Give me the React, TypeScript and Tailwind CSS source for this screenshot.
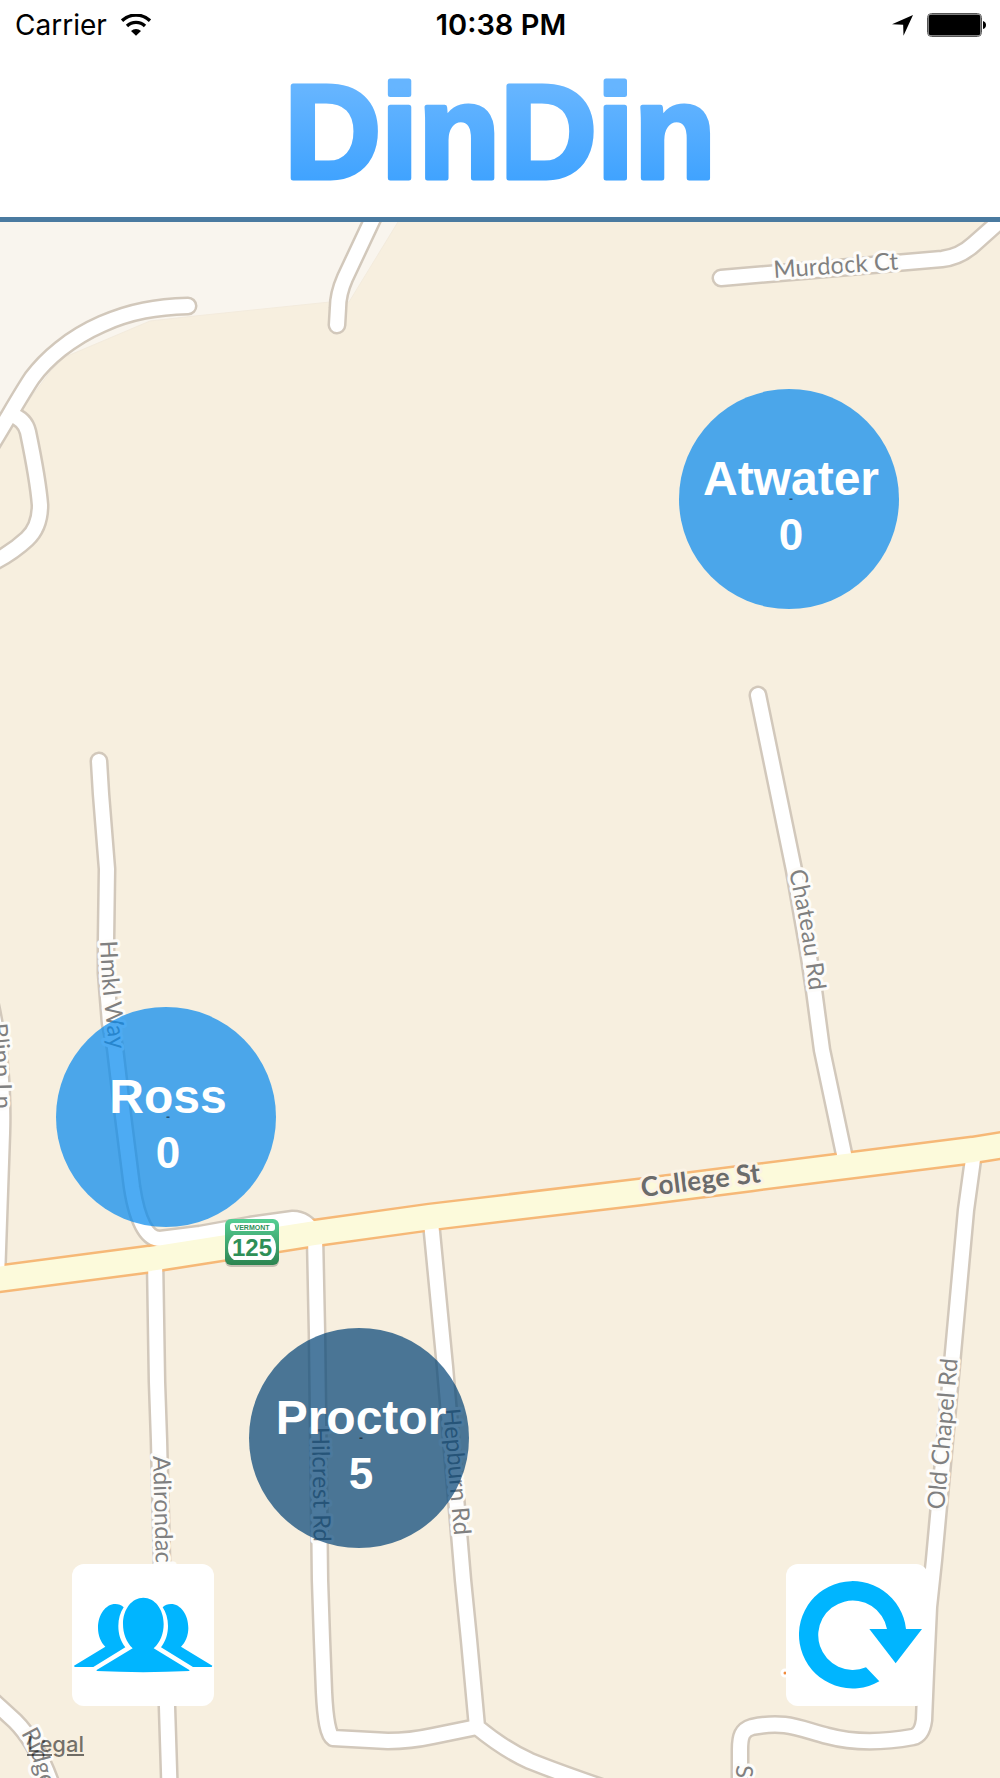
type Pin = {
  name: string;
  count: number;
  x: number;
  y: number;
  busy?: boolean;
};

type RoadLabel = {
  id: string;
  text: string;
  d: string;
  major?: boolean;
};

// map canvas units
const MAP_WIDTH = 1000;
const MAP_HEIGHT = 1556;

const pins: Pin[] = [
  { name: "Atwater", count: 0, x: 789, y: 277 },
  { name: "Ross", count: 0, x: 166, y: 895 },
  { name: "Proctor", count: 5, x: 359, y: 1216, busy: true },
];

const roads = [
  "M188 84 C157 85 131 89 102 102 C70 116 46 137 32 156 C20 174 8 196 -8 222",
  "M11 193 Q25 197 28 210 Q38 258 40 283 Q40 305 27 317 Q13 330 -6 340",
  "M376 -10 L345 56 Q338 72 338 86 L337 103",
  "M721 56 L942 37 Q960 35 974 22 L1010 -10",
  "M758 473 L794 648 L808 728 L814 768 L822 828 L844 932",
  "M99 539 L101 572 L107 647 L106 719 L106 751 L110 801 L115 826 L123 894 L132 965 Q140 1017 160 1017 L200 1012 L250 1003 L293 997 Q306 997 315 1012",
  "M-11 775 Q-1 820 0 844 Q3 880 2 911 L-3 1056",
  "M155 1036 L157 1160 L159 1218 L162 1341 L167 1485 L170 1580",
  "M315 1014 L317 1111 L320 1358 L322 1418 L324 1470 Q326 1512 333 1516 L388 1519 Q410 1519 433 1514 L477 1505",
  "M431 1000 L445 1145 L463 1358 L469 1418 L477 1505 Q505 1528 530 1539 Q560 1551 610 1568",
  "M974 930 L966 988 L953 1131 L934 1338 L929 1385 L926 1450 L924 1498 Q922 1513 913 1515 C880 1521 850 1520 828 1514 C800 1507 786 1498 752 1505 C742 1508 740 1514 740 1528 L740 1580",
  "M-8 1478 L15 1499 Q40 1524 56 1576",
];

const collegeSt = "M-10 1058 L150 1037 L315 1011 L430 995 L640 970 L750 956 L973 928 L1010 922";

const roadLabels: RoadLabel[] = [
  { id: "murdock", text: "Murdock Ct", d: "M774 56 L960 43" },
  { id: "chateau", text: "Chateau Rd", d: "M789 649 L801 708 L814 802" },
  { id: "hmkl", text: "Hmkl Way", d: "M100 719 L102 760 L113 860" },
  { id: "blinn", text: "Blinn Ln", d: "M-10 802 L-6 840 L-4 940" },
  { id: "college", text: "College St", d: "M642 975 L850 949", major: true },
  { id: "old-chapel", text: "Old Chapel Rd", d: "M944 1288 L963 1080" },
  { id: "hilcrest", text: "Hilcrest Rd", d: "M312 1205 L315 1400" },
  { id: "hepburn", text: "Hepburn Rd", d: "M443 1187 L460 1380" },
  { id: "adirondack", text: "Adirondack", d: "M153 1234 L158 1420" },
  { id: "ridge", text: "Ridge", d: "M21 1511 L30 1528 L42 1570" },
  { id: "south", text: "S", d: "M736 1543 L736 1600" },
];

function WifiIcon() {
  return (
    <svg viewBox="0 0 90 66" className="h-[22px] w-[30px]" fill="none" stroke="black" strokeWidth="10" aria-hidden="true">
      <path d="M3 20 A61 61 0 0 1 87 20" />
      <path d="M18 36 A39 39 0 0 1 72 36" />
      <path d="M45 65 L30 51 A22 22 0 0 1 60 51 Z" fill="black" stroke="none" />
    </svg>
  );
}

function LocationIcon() {
  return (
    <svg viewBox="0 0 64 64" className="h-[21px] w-[21px]" aria-hidden="true">
      <path d="M64 0 L35 63 L34 30 L0 28 Z" />
    </svg>
  );
}

function BatteryIcon() {
  return (
    <svg viewBox="0 0 60 24" className="h-6 w-[60px]" aria-hidden="true">
      <rect x="0.5" y="0.5" width="54" height="23" rx="4" fill="white" stroke="#555" />
      <rect x="1.5" y="1.5" width="52" height="21" rx="3" />
      <path d="M56 8 Q59 9 59 12 Q59 15 56 16 Z" />
    </svg>
  );
}

function GroupIcon() {
  const side =
    "M155 130 C148 122 140 120 130 120 C101 120 78 152 78 192 C78 215 87 236 100 248 L6 305 L8 309 L64 309 L160 250 C146 232 139 210 139 186 C139 165 145 145 155 130 Z";
  return (
    <svg viewBox="0 0 426 426" className="h-full w-full" fill="#00b5ff" aria-hidden="true">
      <path d={side} />
      <path d={side} transform="translate(427) scale(-1 1)" />
      <path d="M182 253 C163 235 153 208 153 180 C153 135 180 101 214 101 C248 101 275 135 275 180 C275 208 265 235 245 253 L352 318 L352 321 Q214 328 74 321 L74 318 Z" />
    </svg>
  );
}

function RefreshIcon() {
  return (
    <svg viewBox="0 0 426 426" className="h-full w-full" fill="#00b5ff" aria-hidden="true">
      <path d="M360 195 A161 161 0 1 0 280 352 L240 310 A104 104 0 1 1 303 195 L250 195 L329 298 L408 195 Z" />
    </svg>
  );
}

function Header() {
  return (
    <header className="border-b-5 border-[#4a7aa0] bg-white">
      <div className="grid h-[50px] grid-cols-3 items-center pr-[13px] pl-[15px] font-['Inter',sans-serif] text-[28px] leading-[34px] text-black">
        <div className="flex items-center gap-[14px]">
          <span>Carrier</span>
          <WifiIcon />
        </div>
        <time className="text-center text-[29px] font-semibold whitespace-nowrap">10:38 PM</time>
        <div className="flex items-center justify-end gap-[14px]">
          <LocationIcon />
          <BatteryIcon />
        </div>
      </div>
      <h1 className="flex justify-center">
        <svg viewBox="0 0 460 167" className="h-[167px] w-[460px]" role="img" aria-label="DinDin">
          <defs>
            <linearGradient id="logo" gradientUnits="userSpaceOnUse" x1="0" y1="38" x2="0" y2="130">
              <stop offset="0" stopColor="#66b5ff" />
              <stop offset="1" stopColor="#40a3ff" />
            </linearGradient>
          </defs>
          <text
            x="230"
            y="128"
            textAnchor="middle"
            fill="url(#logo)"
            stroke="url(#logo)"
            strokeWidth="5"
            strokeLinejoin="round"
            className="font-['Liberation_Sans',sans-serif] text-[134px] font-bold"
          >
            DinDin
          </text>
        </svg>
      </h1>
    </header>
  );
}

function RouteShield() {
  return (
    <g transform="translate(225 997)">
      <rect x="0" y="2" width="54" height="46" rx="6" fill="#000" opacity="0.2" />
      <rect width="54" height="46" rx="6" fill="url(#shield)" />
      <rect x="5" y="4" width="45" height="8" rx="3" fill="white" />
      <path d="M9 16 H46 Q51 21 51 29 Q51 37 46 41 H9 Q3 37 3 29 Q3 21 9 16 Z" fill="white" />
      <g
        fill="#2f8f57"
        textAnchor="middle"
        className="font-['Liberation_Sans_Narrow','Liberation_Sans',sans-serif] font-bold"
      >
        <text x="27" y="11" className="text-[7px]">
          VERMONT
        </text>
        <text x="27" y="37" className="text-2xl">
          125
        </text>
      </g>
    </g>
  );
}

function StreetMap() {
  return (
    <svg
      viewBox={`0 0 ${MAP_WIDTH} ${MAP_HEIGHT}`}
      preserveAspectRatio="xMidYMid slice"
      className="absolute inset-0 h-full w-full"
      role="img"
      aria-label="Campus map"
    >
      <defs>
        <linearGradient id="shield" x1="0" y1="0" x2="0" y2="1">
          <stop offset="0" stopColor="#55cf94" />
          <stop offset="1" stopColor="#2c8450" />
        </linearGradient>
        {roadLabels.map((label) => (
          <path key={label.id} id={label.id} d={label.d} />
        ))}
      </defs>

      <path
        d="M-5 -5 H401 L349 80 L330 80 L195 94 L150 99 L65 135 L50 150 L20 190 L-5 226 Z"
        fill="#f9f5ee"
        stroke="#f3ebdd"
      />

      <g fill="none" strokeLinecap="round" strokeLinejoin="round">
        {roads.map((d) => (
          <path key={d} d={d} stroke="#d2c8bb" strokeWidth="19" />
        ))}
        <path d={collegeSt} stroke="#f6b877" strokeWidth="29" />
        {roads.map((d) => (
          <path key={d} d={d} stroke="white" strokeWidth="14" />
        ))}
        <path d={collegeSt} stroke="#fcfadb" strokeWidth="24" />
      </g>

      <g strokeWidth="6" strokeLinejoin="round" className="font-['Lato',sans-serif] [paint-order:stroke]">
        {roadLabels.map((label) => (
          <text
            key={label.id}
            fill={label.major ? "#6b6b6b" : "#808080"}
            stroke={label.major ? "#fbf3e6" : "#fdfcfa"}
            className={label.major ? "text-[27px] font-bold" : "text-[24px]"}
          >
            <textPath href={`#${label.id}`}>{label.text}</textPath>
          </text>
        ))}
      </g>

      <circle cx="785" cy="1451" r="3" fill="#f08a3c" stroke="white" strokeWidth="3" />
      <RouteShield />
    </svg>
  );
}

function DiningPin({ pin }: { pin: Pin }) {
  return (
    <button
      type="button"
      className={`absolute flex h-[220px] w-[220px] -translate-x-1/2 -translate-y-1/2 flex-col items-center rounded-full pt-[66px] pl-1 font-['Liberation_Sans',sans-serif] font-bold text-white ${
        pin.busy ? "bg-[#004175]/70" : "bg-[#0287ee]/70"
      }`}
      style={{ left: `${(pin.x / MAP_WIDTH) * 100}%`, top: `${(pin.y / MAP_HEIGHT) * 100}%` }}
    >
      <span className="text-[48px] leading-[48px]">{pin.name}</span>
      <span className="mt-2 text-[44px] leading-[48px]">{pin.count}</span>
      <span className="absolute inset-x-0 top-26 pl-1 text-xs leading-3 text-black/50">-</span>
    </button>
  );
}

export default function App() {
  return (
    <div className="flex min-h-screen flex-col bg-white">
      <Header />
      <main className="relative min-h-[900px] flex-1 overflow-hidden bg-[#f7efdf]">
        <StreetMap />
        {pins.map((pin) => (
          <DiningPin key={pin.name} pin={pin} />
        ))}
        <div className="absolute inset-x-0 bottom-0 flex justify-between px-[72px] pb-[72px]">
          <button type="button" aria-label="Friends" className="h-[142px] w-[142px] rounded-xl bg-white">
            <GroupIcon />
          </button>
          <button type="button" aria-label="Refresh" className="h-[142px] w-[142px] rounded-xl bg-white">
            <RefreshIcon />
          </button>
        </div>
        <a
          href="#legal"
          className="absolute bottom-5 left-[27px] font-['Inter',sans-serif] text-[22px] leading-7 font-medium text-black/55 underline"
        >
          Legal
        </a>
      </main>
    </div>
  );
}
